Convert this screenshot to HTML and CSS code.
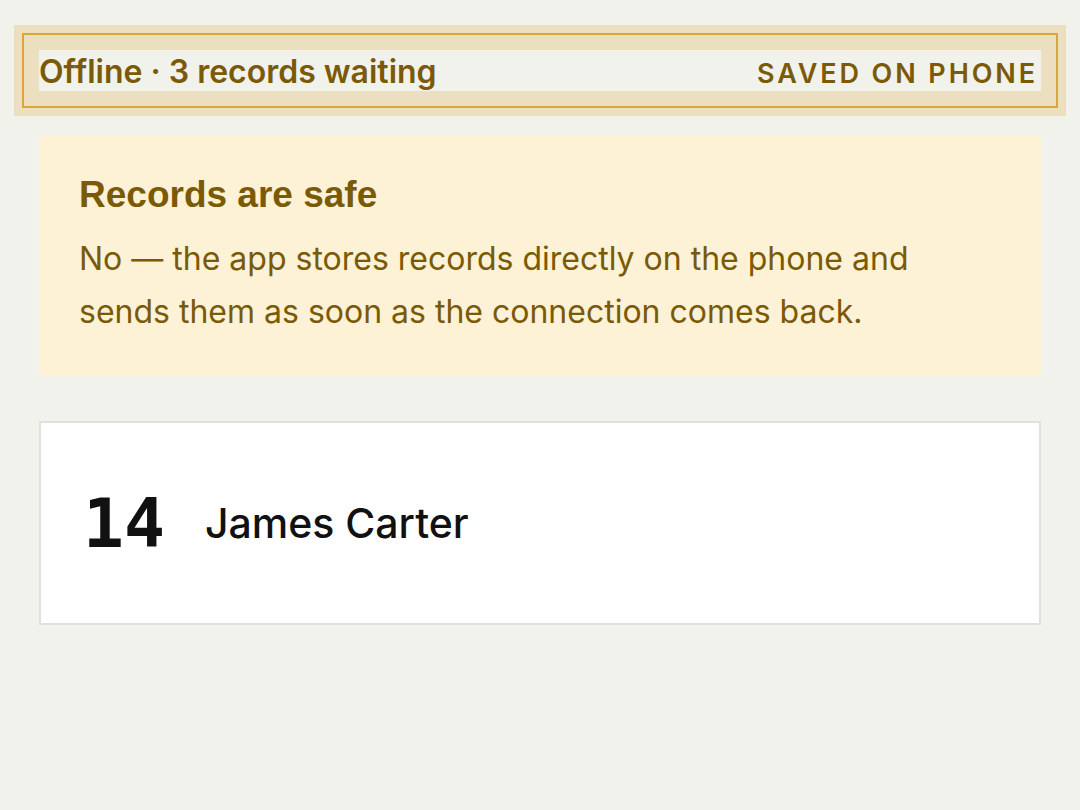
FILE: index.html
```html
<!DOCTYPE html>
<html lang="en">
<head>
    <meta charset="UTF-8">
    <meta name="viewport" content="width=device-width, initial-scale=1.0">
    <title>Offline records</title>
    <link rel="stylesheet" href="styles.css">
</head>
<body>
    <main class="page">
        <div class="status-bar">
            <span class="status-text">Offline · 3 records waiting</span>
            <span class="status-tag">SAVED ON PHONE</span>
        </div>

        <section class="notice">
            <h2 class="notice-title">Records are safe</h2>
            <p class="notice-text">No — the app stores records directly on the phone and sends them as soon as the connection comes back.</p>
        </section>

        <div class="record-card">
            <span class="record-number">14</span>
            <span class="record-name">James Carter</span>
        </div>
    </main>
</body>
</html>
```

FILE: styles.css
```css
body {
    margin: 0;
    background-color: #f2f2ed;
    font-family: Inter, Roboto, "Liberation Sans", sans-serif;
}
.page {
    padding: 50px 39px;
    display: flex;
    flex-direction: column;
    gap: 45px;
}
.status-bar {
    display: flex;
    justify-content: space-between;
    align-items: baseline;
    height: 41px;
    line-height: 43px;
    color: #7a5a06;
    outline: 2px solid #d9a63c;
    outline-offset: 15px;
    box-shadow: 0 0 0 25px #ecdfc0;
}
.status-text {
    font-size: 32px;
    font-weight: 600;
}
.status-tag {
    font-size: 27px;
    font-weight: 600;
    letter-spacing: 2.9px;
    margin-right: 3px;
}
.notice {
    background-color: #fdf1d6;
    color: #7a5a06;
    padding: 38px 40px 38px;
}
.notice-title {
    margin: 0 0 16px;
    font-family: "Liberation Sans", Arial, sans-serif;
    font-size: 37px;
    font-weight: bold;
}
.notice-text {
    margin: 0;
    max-width: 860px;
    font-size: 32px;
    font-weight: 400;
    line-height: 53px;
}
.record-card {
    display: flex;
    align-items: center;
    gap: 40px;
    height: 200px;
    padding: 0 42px;
    background-color: #fff;
    border: 2px solid #e1e1dc;
    color: #111;
}
.record-number {
    font-family: "DejaVu Sans Mono", monospace;
    font-size: 68px;
    font-weight: bold;
}
.record-name {
    font-size: 41px;
    font-weight: 500;
}
```
